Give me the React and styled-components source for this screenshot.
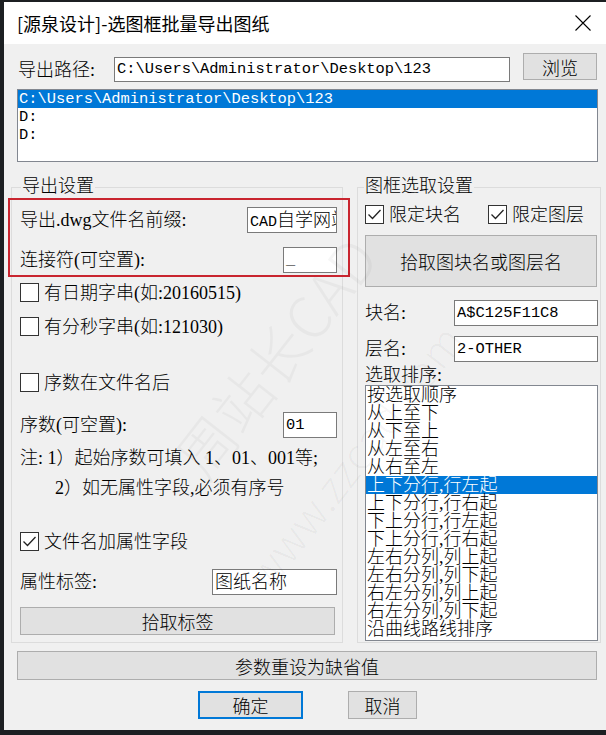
import React from 'react'
import styled, { createGlobalStyle } from 'styled-components'

const GlobalStyle = createGlobalStyle`
  html, body {
    margin: 0;
    padding: 0;
    background: #1c1f22;
  }
  body {
    width: 606px;
    height: 735px;
    overflow: hidden;
  }
`

const SERIF = `"Liberation Serif", "Noto Sans CJK SC", serif`
const MONO = `"Liberation Mono", "Noto Sans CJK SC", monospace`

const Dialog = styled.div`
  position: relative;
  margin: 2px 0 0 4px;
  width: 602px;
  height: 728px;
  background: #f0f0f0;
  display: flex;
  flex-direction: column;
  font-family: ${SERIF};
  font-size: 18px;
  font-weight: 300;
  color: #000;
  overflow: hidden;
`

const TitleBar = styled.div`
  flex: none;
  height: 42px;
  background: #fff;
  display: flex;
  align-items: center;
  justify-content: space-between;
  padding: 0 15px 0 13px;
  box-sizing: border-box;
`

const Title = styled.span`
  font-family: "Noto Sans CJK SC", sans-serif;
  font-size: 18px;
  font-weight: 400;
  line-height: 24px;
`

const Body = styled.div`
  display: flex;
  flex-direction: column;
  padding: 0 5px 0 7px;
`

const PathRow = styled.div`
  display: flex;
  align-items: flex-start;
  height: 29px;
  margin: 9px 4px 0 7px;
`

const Label = styled.span`
  line-height: 20px;
  white-space: nowrap;
  width: ${p => (p.$width ? `${p.$width}px` : 'auto')};
  margin-top: ${p => p.$top || 0}px;
  margin-left: ${p => p.$indent || 0}px;
`

const Field = styled.div`
  flex: none;
  box-sizing: border-box;
  width: ${p => p.$width}px;
  height: ${p => p.$height || 26}px;
  margin-top: ${p => p.$top || 0}px;
  border: 1px solid #7a7a7a;
  background: #fff;
  padding-left: 2px;
  line-height: ${p => (p.$height || 26) - 2}px;
  font-family: ${p => (p.$mono ? MONO : SERIF)};
  font-size: ${p => (p.$mono ? '15.4px' : '18px')};
  white-space: nowrap;
  overflow: hidden;
`

const Mono = styled.span`
  font-family: ${MONO};
  font-size: 15px;
`

const Button = styled.button`
  flex: none;
  box-sizing: border-box;
  width: ${p => (p.$width ? `${p.$width}px` : 'auto')};
  height: ${p => p.$height || 28}px;
  margin: ${p => p.$margin || '0'};
  padding: 0;
  background: #e1e1e1;
  border: ${p => (p.$primary ? '2px solid #0078d7' : '1px solid #adadad')};
  font-family: ${SERIF};
  font-size: 18px;
  font-weight: 300;
  color: #000;
  display: flex;
  align-items: center;
  justify-content: center;
`

const ListBox = styled.div`
  box-sizing: border-box;
  height: ${p => p.$height}px;
  margin: ${p => p.$margin || '0'};
  border: 1px solid #828790;
  background: #fff;
  font-family: ${p => (p.$mono ? MONO : SERIF)};
  font-size: ${p => (p.$mono ? '15.4px' : '18px')};
  overflow: hidden;
`

const ListItem = styled.div`
  height: 18px;
  line-height: 18px;
  padding-left: 1px;
  white-space: nowrap;
  background: ${p => (p.$selected ? '#0078d7' : 'transparent')};
  color: ${p => (p.$selected ? '#fff' : '#000')};
`

const GroupsRow = styled.div`
  display: flex;
  gap: 14px;
  margin-top: 25px;
`

const GroupBox = styled.div`
  box-sizing: border-box;
  width: ${p => p.$width}px;
  border: 1px solid #dcdcdc;
  padding: 0 ${p => p.$right}px ${p => p.$bottom}px ${p => p.$left}px;
  display: flex;
  flex-direction: column;
`

const Legend = styled.span`
  align-self: flex-start;
  margin: -12px 0 0 ${p => p.$indent}px;
  padding: 0 1px;
  background: #f0f0f0;
  line-height: 20px;
`

const Row = styled.div`
  display: flex;
  align-items: center;
  justify-content: space-between;
  height: 26px;
  margin-top: ${p => p.$top || 0}px;
`

const Highlight = styled.div`
  position: relative;
  margin-top: ${p => p.$top}px;

  &::after {
    content: '';
    position: absolute;
    left: -12px;
    right: -13px;
    top: -9px;
    bottom: -4px;
    border: 2px solid #c9252f;
    pointer-events: none;
  }
`

const CheckRow = styled.div`
  display: flex;
  align-items: center;
  height: 19px;
  margin-top: ${p => p.$top || 0}px;
`

const CheckItem = styled.label`
  display: flex;
  align-items: center;
  gap: 5px;
  width: ${p => (p.$width ? `${p.$width}px` : 'auto')};
  line-height: 20px;
  white-space: nowrap;
`

const Box = styled.span`
  flex: none;
  box-sizing: border-box;
  width: 19px;
  height: 19px;
  border: 1px solid #333;
  background: #fff;
  display: flex;
  align-items: center;
  justify-content: center;
`

const Note = styled.div`
  line-height: 20px;
  white-space: pre;
  margin-top: ${p => p.$top}px;
  margin-left: ${p => p.$indent || 0}px;
`

const BottomRow = styled.div`
  display: flex;
  margin: 11px 0 0 187px;
  gap: 45px;
`

const Watermark = styled.div`
  position: absolute;
  left: ${p => p.$x}px;
  top: ${p => p.$y}px;
  transform: rotate(-52deg);
  transform-origin: left top;
  font-family: "Noto Sans CJK SC", sans-serif;
  font-size: ${p => p.$size}px;
  color: rgba(0, 0, 0, 0.035);
  white-space: nowrap;
  pointer-events: none;
`

const CloseIcon = () => (
  <svg width="16" height="16" viewBox="0 0 16 16">
    <path d="M0.5 0.5 L15.5 15.5 M15.5 0.5 L0.5 15.5" stroke="#000" strokeWidth="1.1" fill="none" />
  </svg>
)

const Check = ({ checked, children, width }) => (
  <CheckItem $width={width}>
    <Box>
      {checked && (
        <svg width="15" height="15" viewBox="0 0 15 15">
          <polyline points="1.5,7.5 5.5,11.5 13.5,3" stroke="#222" strokeWidth="1.3" fill="none" />
        </svg>
      )}
    </Box>
    {children}
  </CheckItem>
)

const sortOptions = [
  '按选取顺序',
  '从上至下',
  '从下至上',
  '从左至右',
  '从右至左',
  '上下分行,行左起',
  '上下分行,行右起',
  '下上分行,行左起',
  '下上分行,行右起',
  '左右分列,列上起',
  '左右分列,列下起',
  '右左分列,列上起',
  '右左分列,列下起',
  '沿曲线路线排序',
]

const paths = ['C:\\Users\\Administrator\\Desktop\\123', 'D:', 'D:']

export default function App() {
  return (
    <>
      <GlobalStyle />
      <Dialog>
        <TitleBar>
          <Title>[源泉设计]-选图框批量导出图纸</Title>
          <CloseIcon />
        </TitleBar>
        <Body>
          <PathRow>
            <Label $width={96} $top={7}>导出路径:</Label>
            <Field $width={396} $height={25} $top={4} $mono>C:\Users\Administrator\Desktop\123</Field>
            <Button $width={74} $height={27} $margin="0 0 0 auto">浏览</Button>
          </PathRow>
          <ListBox $height={73} $margin="7px 3px 0 6px" $mono>
            {paths.map((p, i) => (
              <ListItem key={i} $selected={i === 0}>{p}</ListItem>
            ))}
          </ListBox>

          <GroupsRow>
            <GroupBox $width={332} $left={8} $right={5} $bottom={7}>
              <Legend $indent={1}>导出设置</Legend>
              <Highlight $top={11}>
                <Row>
                  <Label>导出.dwg文件名前缀:</Label>
                  <Field $width={90}><Mono>CAD</Mono>自学网站</Field>
                </Row>
                <Row $top={14}>
                  <Label>连接符(可空置):</Label>
                  <Field $width={54} $mono>_</Field>
                </Row>
              </Highlight>
              <CheckRow $top={10}><Check>有日期字串(如:20160515)</Check></CheckRow>
              <CheckRow $top={15}><Check>有分秒字串(如:121030)</Check></CheckRow>
              <CheckRow $top={37}><Check>序数在文件名后</Check></CheckRow>
              <Row $top={20}>
                <Label>序数(可空置):</Label>
                <Field $width={54} $mono>01</Field>
              </Row>
              <Note $top={10}>注: 1）起始序数可填入 1、01、001等;</Note>
              <Note $top={10} $indent={35}>2）如无属性字段,必须有序号</Note>
              <CheckRow $top={34}><Check checked>文件名加属性字段</Check></CheckRow>
              <Row $top={18}>
                <Label>属性标签:</Label>
                <Field $width={125}>图纸名称</Field>
              </Row>
              <Button $height={28} $margin="12px 2px 0 0">拾取标签</Button>
            </GroupBox>

            <GroupBox $width={244} $left={7} $right={2} $bottom={1}>
              <Legend $indent={-1}>图框选取设置</Legend>
              <CheckRow $top={9}>
                <Check checked width={123}>限定块名</Check>
                <Check checked>限定图层</Check>
              </CheckRow>
              <Button $height={52} $margin="11px 1px 0 0">拾取图块名或图层名</Button>
              <Row $top={13}>
                <Label>块名:</Label>
                <Field $width={144} $mono>A$C125F11C8</Field>
              </Row>
              <Row $top={10}>
                <Label>层名:</Label>
                <Field $width={144} $mono>2-OTHER</Field>
              </Row>
              <Label $top={3}>选取排序:</Label>
              <ListBox $height={256}>
                {sortOptions.map((o, i) => (
                  <ListItem key={o} $selected={i === 5}>{o}</ListItem>
                ))}
              </ListBox>
            </GroupBox>
          </GroupsRow>

          <Button $height={29} $margin="8px 4px 0 6px">参数重设为缺省值</Button>
          <BottomRow>
            <Button $width={105} $primary>确定</Button>
            <Button $width={69}>取消</Button>
          </BottomRow>
        </Body>
        <Watermark $x={150} $y={440} $size={58}>周站长CAD</Watermark>
        <Watermark $x={225} $y={560} $size={44}>www.zzcad.com</Watermark>
      </Dialog>
    </>
  )
}
